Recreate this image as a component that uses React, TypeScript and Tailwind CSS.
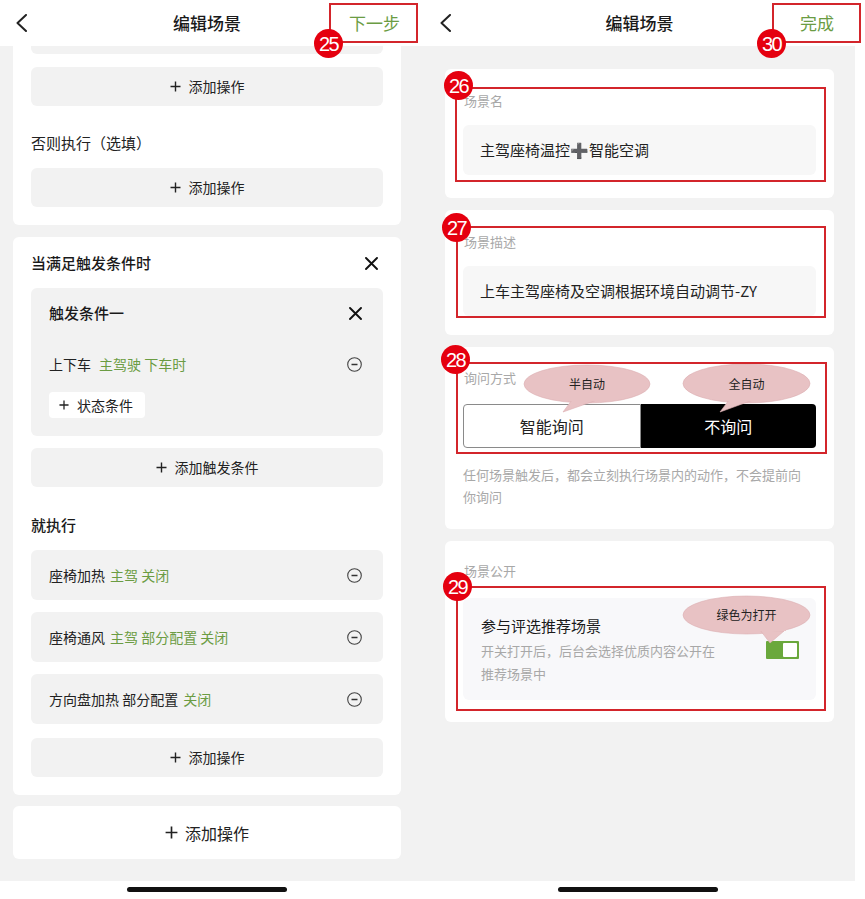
import React from "react";

const green = "text-[#6b9c43]";

function Chevron() {
  return (
    <svg width="13" height="18" viewBox="0 0 13 18" fill="none">
      <polyline points="11,1 2.5,9 11,17" stroke="#222" strokeWidth="2" strokeLinecap="round" strokeLinejoin="round" />
    </svg>
  );
}

function Plus({ size = 11 }: { size?: number }) {
  return (
    <svg width={size} height={size} viewBox="0 0 11 11" fill="none">
      <path d="M5.5 0.5v10M0.5 5.5h10" stroke="#222" strokeWidth="1.4" />
    </svg>
  );
}

function XIcon() {
  return (
    <svg width="13" height="13" viewBox="0 0 13 13" fill="none">
      <path d="M1 1l11 11M12 1L1 12" stroke="#111" strokeWidth="1.9" strokeLinecap="round" />
    </svg>
  );
}

function MinusCircle() {
  return (
    <svg width="15" height="15" viewBox="0 0 15 15" fill="none">
      <circle cx="7.5" cy="7.5" r="6.8" stroke="#444" strokeWidth="1.1" />
      <path d="M4.5 7.5h6" stroke="#333" strokeWidth="1.5" />
    </svg>
  );
}

function AddBtn({ label, className = "" }: { label: string; className?: string }) {
  return (
    <div className={`h-[39px] rounded-[6px] bg-[#f2f2f2] flex items-center justify-center gap-[8px] text-[14px] text-[#222] ${className}`}>
      <Plus />
      <span>{label}</span>
    </div>
  );
}

function ActionRow({ children, className = "" }: { children: React.ReactNode; className?: string }) {
  return (
    <div className={`h-[50px] rounded-[6px] bg-[#f2f2f2] pl-[18px] pr-[21px] flex items-center justify-between text-[14px] text-[#222] ${className}`}>
      <div className="flex gap-[5px]">{children}</div>
      <MinusCircle />
    </div>
  );
}

function Header({ title, action, left, right, pr }: { title: string; action: string; left: string; right: string; pr: string }) {
  return (
    <div className="h-[46px] bg-white flex items-center">
      <div className={`${left} pl-[15px] flex items-center`}>
        <Chevron />
      </div>
      <div className="flex-1 text-center text-[17px] font-medium text-[#1a1a1a]">{title}</div>
      <div className={`${right} ${pr} text-right text-[17px] ${green}`}>{action}</div>
    </div>
  );
}

function HomeBar({ pl }: { pl: string }) {
  return (
    <div className={`h-[18px] bg-white pt-[6px] ${pl}`}>
      <div className="w-[160px] h-[5px] rounded-full bg-[#111]" />
    </div>
  );
}

function Label({ children }: { children: React.ReactNode }) {
  return <div className="h-[18px] leading-[18px] text-[13px] text-[#a8a8a8] pl-[1px]">{children}</div>;
}

function Field({ children }: { children: React.ReactNode }) {
  return (
    <div className="mt-[15px] h-[50px] rounded-[6px] bg-[#f7f7f7] pl-[17px] flex items-center text-[15px] text-[#222]">
      {children}
    </div>
  );
}

function RedBox({ className }: { className: string }) {
  return <div className={`absolute border-2 border-[#d3252b] ${className}`} />;
}

function Badge({ n, className }: { n: string; className: string }) {
  return (
    <div
      className={`absolute w-[29px] h-[29px] rounded-full bg-[#e5000f] text-white text-[20px] leading-none flex items-center justify-center tracking-[-1.5px] font-['Liberation_Sans',sans-serif] ${className}`}
    >
      {n}
    </div>
  );
}

function Bubble({ text, className }: { text: string; className: string }) {
  return (
    <div className={`absolute flex items-center justify-center text-[12px] text-[#222] ${className}`}>{text}</div>
  );
}

export default function App() {
  return (
    <div className="relative flex w-[865px] h-[899px] bg-white overflow-hidden font-['Noto_Sans_CJK_SC','Noto_Sans',sans-serif]">
      {/* left screen */}
      <div className="flex flex-col w-[424px]">
        <Header title="编辑场景" action="下一步" left="w-[75px]" right="w-[85px]" pr="pr-[24px]" />
        <div className="flex-1 bg-[#f2f2f2] overflow-hidden pl-[13px]">
          <div className="w-[388px] bg-white rounded-b-[6px] px-[18px] pb-[18px]">
            <div className="h-[8px] bg-[#f2f2f2] rounded-b-[6px]" />
            <AddBtn label="添加操作" className="mt-[13px]" />
            <div className="mt-[25px] h-[24px] leading-[24px] text-[15px] text-[#222]">否则执行（选填）</div>
            <AddBtn label="添加操作" className="mt-[13px]" />
          </div>

          <div className="mt-[12px] w-[388px] bg-white rounded-[6px] px-[18px] pt-[15px] pb-[18px]">
            <div className="h-[22px] flex items-center justify-between pr-[5px]">
              <span className="text-[15px] font-medium text-[#1a1a1a]">当满足触发条件时</span>
              <XIcon />
            </div>
            <div className="mt-[14px] rounded-[6px] bg-[#f2f2f2] pl-[18px] pr-[21px] pt-[14px] pb-[18px]">
              <div className="h-[22px] flex items-center justify-between">
                <span className="text-[15px] font-medium text-[#1a1a1a]">触发条件一</span>
                <XIcon />
              </div>
              <div className="mt-[29px] h-[22px] flex items-center justify-between text-[14px] text-[#222]">
                <div className="flex gap-[8px]">
                  <span>上下车</span>
                  <span className={green}>主驾驶 下车时</span>
                </div>
                <MinusCircle />
              </div>
              <div className="mt-[17px] h-[26px] w-fit bg-white rounded-[4px] pl-[10px] pr-[12px] flex items-center gap-[8px] text-[14px] text-[#222]">
                <Plus size={10} />
                <span>状态条件</span>
              </div>
            </div>
            <AddBtn label="添加触发条件" className="mt-[12px]" />
            <div className="mt-[27px] h-[22px] leading-[22px] text-[15px] font-medium text-[#1a1a1a]">就执行</div>
            <ActionRow className="mt-[14px]">
              <span>座椅加热</span>
              <span className={green}>主驾 关闭</span>
            </ActionRow>
            <ActionRow className="mt-[12px]">
              <span>座椅通风</span>
              <span className={green}>主驾 部分配置 关闭</span>
            </ActionRow>
            <ActionRow className="mt-[12px]">
              <span>方向盘加热 部分配置</span>
              <span className={green}>关闭</span>
            </ActionRow>
            <AddBtn label="添加操作" className="mt-[14px]" />
          </div>

          <div className="mt-[11px] w-[388px] h-[53px] bg-white rounded-[6px] flex items-center justify-center gap-[7px] text-[16px] text-[#222]">
            <Plus size={13} />
            <span>添加操作</span>
          </div>
        </div>
        <HomeBar pl="pl-[127px]" />
      </div>

      {/* right screen */}
      <div className="flex flex-col w-[431px]">
        <Header title="编辑场景" action="完成" left="w-[80px]" right="w-[80px]" pr="pr-[21px]" />
        <div className="flex-1 bg-[#f2f2f2] overflow-hidden pl-[21px] pt-[23px]">
          <div className="w-[389px] bg-white rounded-[6px] px-[18px] pt-[23px] pb-[23px]">
            <Label>场景名</Label>
            <Field>主驾座椅温控➕智能空调</Field>
          </div>

          <div className="mt-[12px] w-[389px] bg-white rounded-[6px] px-[18px] pt-[23px] pb-[19px]">
            <Label>场景描述</Label>
            <Field>上车主驾座椅及空调根据环境自动调节-ZY</Field>
          </div>

          <div className="mt-[12px] w-[389px] bg-white rounded-[6px] px-[18px] pt-[22px] pb-[21px]">
            <Label>询问方式</Label>
            <div className="mt-[17px] h-[44px] flex text-[16px]">
              <div className="flex-1 flex items-center justify-center bg-white border border-[#8a8a8a] rounded-l-[4px] text-[#222]">
                智能询问
              </div>
              <div className="flex-1 flex items-center justify-center bg-black rounded-r-[4px] text-white">不询问</div>
            </div>
            <div className="mt-[16px] w-[345px] text-[13px] leading-[22px] text-[#a8a8a8]">
              任何场景触发后，都会立刻执行场景内的动作，不会提前向你询问
            </div>
          </div>

          <div className="mt-[12px] w-[389px] bg-white rounded-[6px] px-[18px] pt-[21px] pb-[22px]">
            <Label>场景公开</Label>
            <div className="mt-[18px] rounded-[6px] bg-[#f8f8fa] pl-[18px] pr-[17px] pt-[17px] pb-[15px] flex items-center justify-between">
              <div>
                <div className="h-[22px] leading-[22px] text-[15px] text-[#1a1a1a]">参与评选推荐场景</div>
                <div className="mt-[2px] w-[240px] text-[13px] leading-[23px] text-[#a8a8a8]">
                  开关打开后，后台会选择优质内容公开在推荐场景中
                </div>
              </div>
              <div className="w-[33px] h-[18px] bg-[#6aa83c] rounded-[1px] flex items-center justify-end pr-[2px]">
                <div className="w-[14px] h-[14px] bg-white rounded-[1px]" />
              </div>
            </div>
          </div>
        </div>
        <HomeBar pl="pl-[134px]" />
      </div>

      {/* annotations */}
      <svg className="absolute left-0 top-0 pointer-events-none" width="865" height="899">
        <g fill="#e8c2c4" stroke="#dcaeb1" strokeWidth="0.6">
          <ellipse cx="587" cy="384" rx="63" ry="19" />
          <path d="M572 400 L597 400 L563 412 Z" />
          <ellipse cx="746.5" cy="383.5" rx="63.5" ry="19.5" />
          <path d="M729 400 L753 400 L720 412 Z" />
          <ellipse cx="746.5" cy="615" rx="63.5" ry="19" />
          <path d="M760 630 L784 631 L770 643 Z" />
        </g>
        <g fill="#e8c2c4">
          <rect x="565" y="396" width="34" height="5" />
          <rect x="725" y="396" width="30" height="5" />
          <rect x="759" y="626" width="27" height="5" />
        </g>
      </svg>
      <Bubble text="半自动" className="left-[524px] top-[365px] w-[126px] h-[38px]" />
      <Bubble text="全自动" className="left-[683px] top-[364px] w-[127px] h-[39px]" />
      <Bubble text="绿色为打开" className="left-[683px] top-[596px] w-[127px] h-[38px]" />

      <RedBox className="left-[329px] top-[3px] w-[89px] h-[40px]" />
      <RedBox className="left-[772px] top-[3px] w-[89px] h-[40px]" />
      <RedBox className="left-[455px] top-[87px] w-[371px] h-[95px]" />
      <RedBox className="left-[456px] top-[226px] w-[370px] h-[92px]" />
      <RedBox className="left-[456px] top-[362px] w-[371px] h-[92px]" />
      <RedBox className="left-[456px] top-[586px] w-[370px] h-[125px]" />

      <Badge n="25" className="left-[314px] top-[29px]" />
      <Badge n="30" className="left-[757px] top-[29px]" />
      <Badge n="26" className="left-[444px] top-[71px]" />
      <Badge n="27" className="left-[442px] top-[213px]" />
      <Badge n="28" className="left-[441px] top-[345px]" />
      <Badge n="29" className="left-[443px] top-[572px]" />
    </div>
  );
}
